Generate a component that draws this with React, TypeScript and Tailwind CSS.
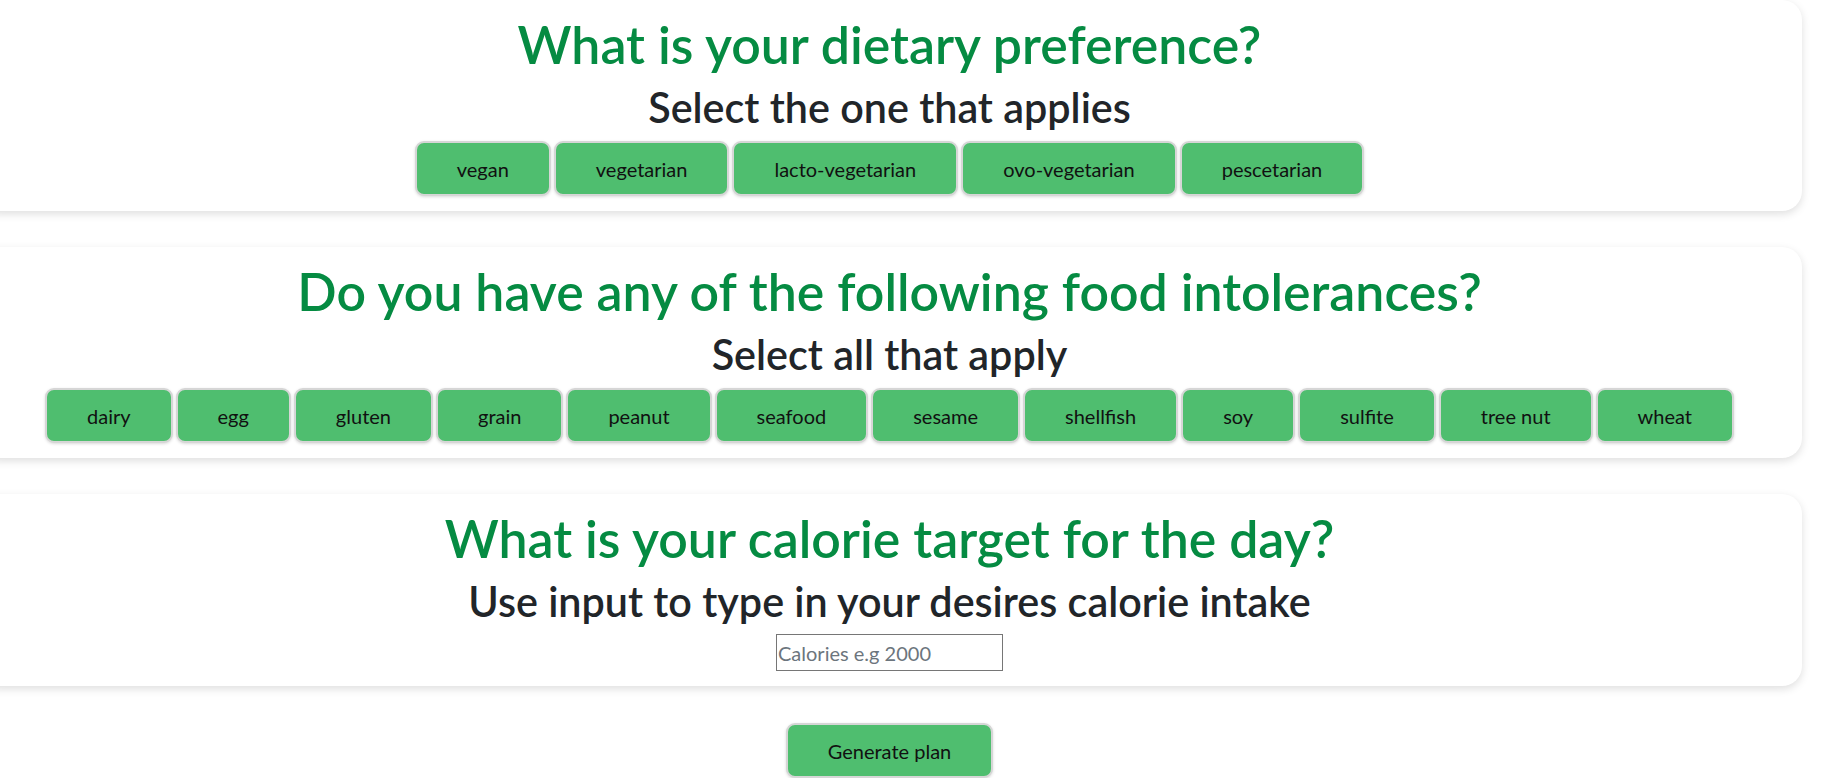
import React from "react";

const diets = ["vegan", "vegetarian", "lacto-vegetarian", "ovo-vegetarian", "pescetarian"];
const intolerances = ["dairy", "egg", "gluten", "grain", "peanut", "seafood", "sesame", "shellfish", "soy", "sulfite", "tree nut", "wheat"];

function Chip({ label }: { label: string }) {
  return (
    <button
      type="button"
      className="h-[55px] rounded-[9px] border-2 border-[#d6d6d6] bg-[#4fbe6f] px-[40px] text-[20px] leading-none text-[#111] shadow-[0_1px_3px_rgba(0,0,0,0.15)]"
    >
      {label}
    </button>
  );
}

function Card({ title, subtitle, children }: { title: string; subtitle: string; children: React.ReactNode }) {
  return (
    <div className="ml-[-23px] mr-[20px] flex flex-col items-center rounded-[20px] bg-white pt-[14px] pb-[15px] shadow-[0_3px_8px_rgba(0,0,0,0.13)]">
      <h1 className="h-[60px] text-[51.8px] leading-[60px] font-semibold text-[#058b42]">{title}</h1>
      <h2 className="mt-[9px] h-[48px] text-[41.3px] leading-[48px] font-semibold text-[#212529]">{subtitle}</h2>
      {children}
    </div>
  );
}

export default function App() {
  return (
    <div className="min-h-[778px] w-full overflow-hidden bg-white font-['Lato','Liberation_Sans',sans-serif]">
      <div className="flex flex-col gap-[36px]">
        <Card title="What is your dietary preference?" subtitle="Select the one that applies">
          <div className="mt-[10px] flex justify-center gap-[3px]">
            {diets.map((d) => (
              <Chip key={d} label={d} />
            ))}
          </div>
        </Card>
        <Card title="Do you have any of the following food intolerances?" subtitle="Select all that apply">
          <div className="mt-[10px] flex justify-center gap-[3px]">
            {intolerances.map((d) => (
              <Chip key={d} label={d} />
            ))}
          </div>
        </Card>
        <Card title="What is your calorie target for the day?" subtitle="Use input to type in your desires calorie intake">
          <input
            type="text"
            placeholder="Calories e.g 2000"
            className="mt-[9px] h-[37px] w-[227px] border border-[#767676] px-[1px] text-[20px] text-[#212529] placeholder:text-[#6c757d] outline-none"
          />
        </Card>
      </div>
      <div className="mt-[37px] flex justify-center pr-[43px]">
        <button
          type="button"
          className="h-[55px] rounded-[9px] border-2 border-[#d6d6d6] bg-[#4fbe6f] px-[40px] text-[20px] leading-none text-[#111] shadow-[0_1px_3px_rgba(0,0,0,0.15)]"
        >
          Generate plan
        </button>
      </div>
    </div>
  );
}
